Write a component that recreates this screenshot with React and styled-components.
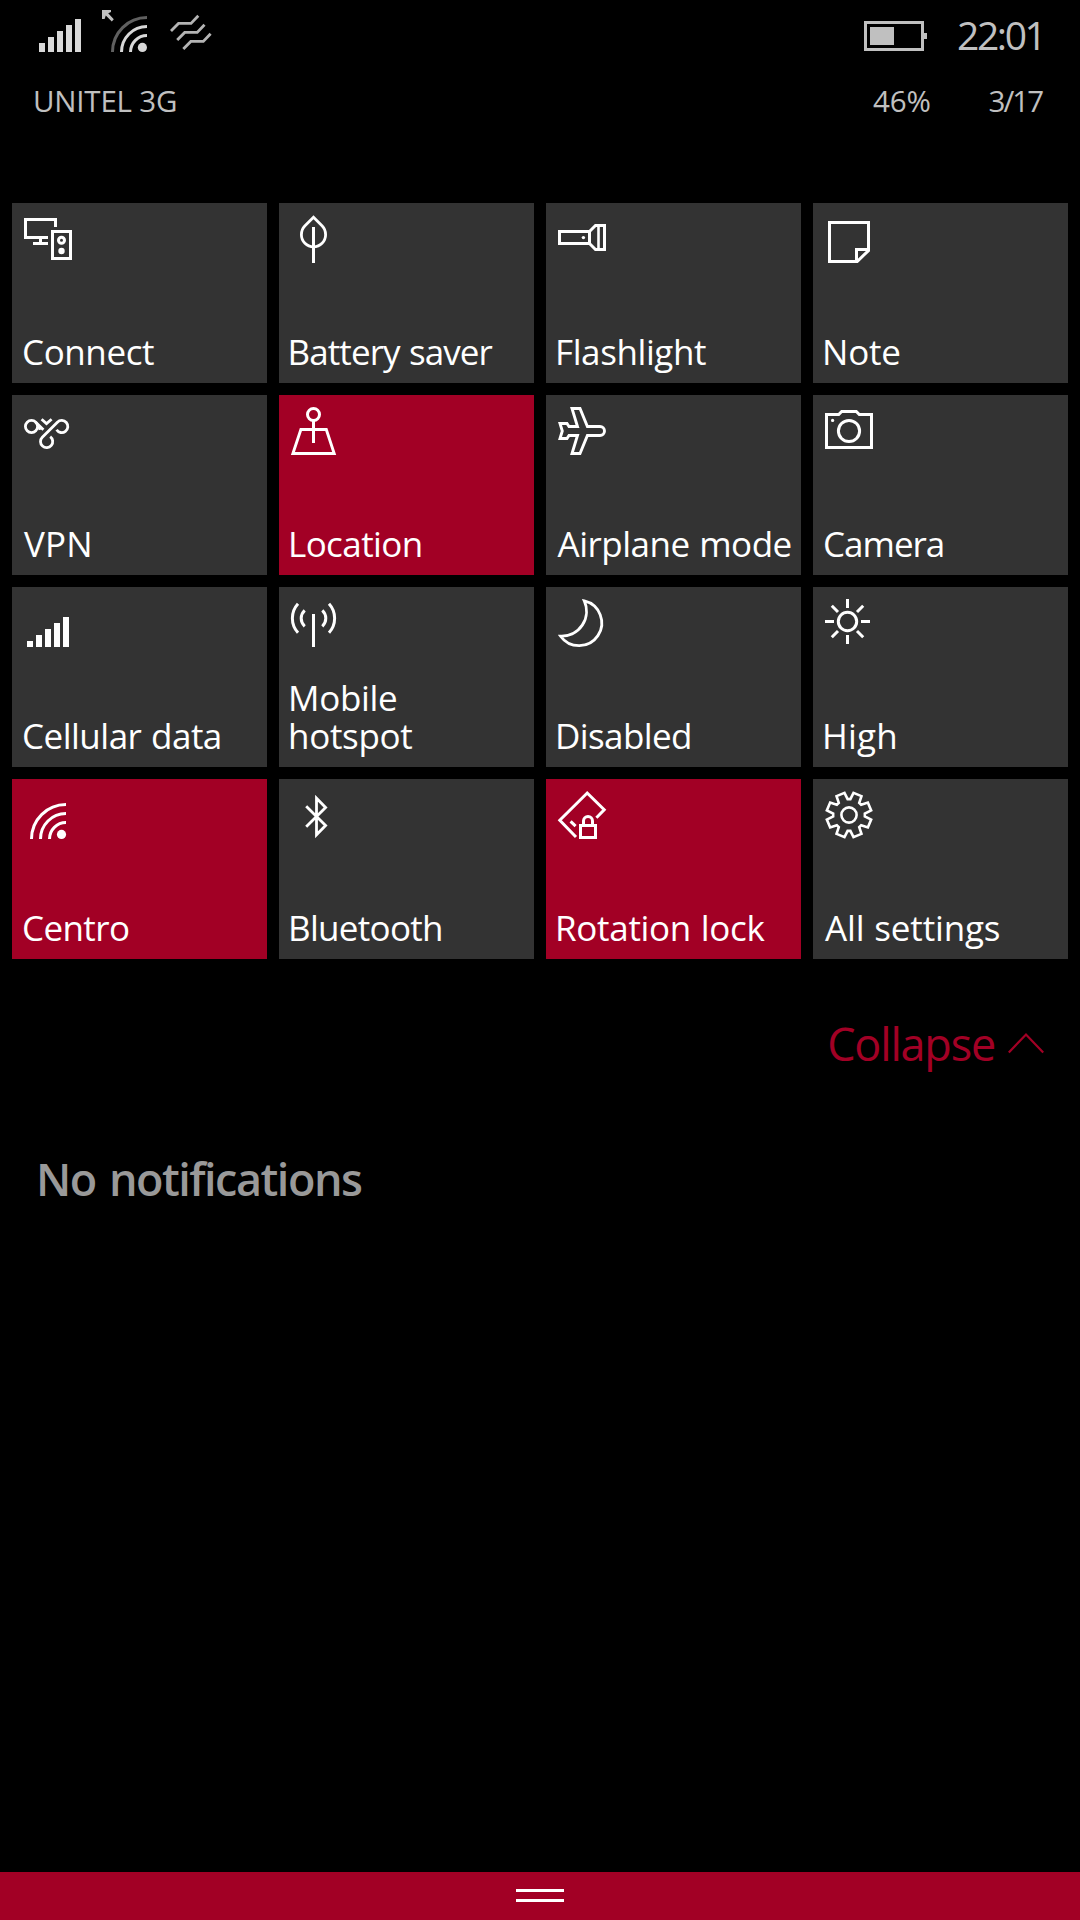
import React from "react";
import styled, { createGlobalStyle } from "styled-components";

const accent = "#a20025";

const polar = (r, deg) => {
  const a = (deg * Math.PI) / 180;
  return `${(36 + r * Math.sin(a)).toFixed(2)} ${(36 - r * Math.cos(a)).toFixed(2)}`;
};

// eight teeth, a flat valley between each pair
const gearPath =
  "M" +
  [0, 45, 90, 135, 180, 225, 270, 315]
    .map((a) =>
      [
        polar(15.9, a - 5),
        polar(15.9, a + 5),
        polar(22.6, a + 11.5),
        polar(22.6, a + 33.5),
      ].join("L")
    )
    .join("L") +
  "Z";

const icons = {
  connect: (
    <>
      <path d="M36 34.5H13.5V16.5H43.5V24M28.5 34.5V40.5M21 40.5H36" />
      <path d="M40.5 28.5H58.5V55.5H40.5Z" />
      <circle cx="49.5" cy="37.3" r="3" />
      <circle className="fill" cx="49.5" cy="48" r="3.2" />
    </>
  ),
  leaf: (
    <>
      <path
        strokeWidth="2.8"
        d="M34.5 14.2L26 22.8C23.6 25.2 22.4 28.3 22.4 31.8A12.1 12.1 0 0 0 46.6 31.8C46.6 28.3 45.4 25.2 43 22.8Z"
      />
      <path d="M34.5 24V60" />
    </>
  ),
  flashlight: (
    <>
      <path d="M43.5 28.5H13.5V40.5H43.5ZM43.5 28.5L49.5 22.5H58.5V46.5H49.5L43.5 40.5" />
      <path strokeWidth="2.6" d="M52.5 22.5V46.5" />
      <circle className="fill" cx="37.4" cy="34.6" r="1.7" />
    </>
  ),
  note: (
    <>
      <path d="M16.5 19.5H55.5V47.5L44.2 58.5H16.5Z" />
      <path d="M43.5 58.5V46.5H55.5" />
    </>
  ),
  vpn: (
    <g strokeWidth="2.8">
      <circle cx="19.5" cy="31.5" r="6.1" />
      <path d="M23.7 27.2L31.4 34.8M26.6 30.4L28 34.8" />
      <path d="M29.6 24.2L34.5 28.6L39.6 24.2" />
      <path d="M44.6 34.8A6.1 6.1 0 1 0 45.4 27.2L30.3 42.2A6.1 6.1 0 1 0 38.2 41.6" />
    </g>
  ),
  location: (
    <>
      <circle cx="34.5" cy="19.5" r="6" />
      <path d="M34.5 26V48" />
      <path strokeWidth="2.9" d="M21.9 34.5H47.3L55.2 58.5H13.9Z" />
    </>
  ),
  airplane: (
    <path
      strokeWidth="2.9"
      d="M54 31.5H41.4L34 13.5H26L31.5 31.5H23L21 28.5H14L16.3 36L14 43.5H21L23 40.5H31.5L26 58.5H34L41.4 40.5H54A4.5 4.5 0 0 0 54 31.5Z"
    />
  ),
  camera: (
    <>
      <path d="M13.5 19.5H25.7L28.7 16.5H43.3L46.3 19.5H58.5V52.5H13.5Z" />
      <circle cx="36" cy="36" r="10.6" />
      <circle className="fill" cx="19.6" cy="25.4" r="1.6" />
    </>
  ),
  cellular: (
    <path
      className="fill"
      d="M15 54h6v6h-6zM24 48h6v12h-6zM33 42h6v18h-6zM42 36h6v24h-6zM51 30h6v30h-6z"
    />
  ),
  hotspot: (
    <>
      <path d="M34.5 27V60" />
      <path d="M25.7 23.3A10.9 10.9 0 0 0 25.7 39.3M43.3 23.3A10.9 10.9 0 0 1 43.3 39.3" />
      <path d="M19 16.8A21.5 21.5 0 0 0 19 45.8M50 16.8A21.5 21.5 0 0 1 50 45.8" />
    </>
  ),
  moon: (
    <path
      strokeWidth="2.8"
      d="M38.3 13.9A22.7 22.7 0 1 1 14.6 49.2A25 25 0 0 0 38.3 13.9Z"
    />
  ),
  sun: (
    <>
      <circle cx="34.5" cy="34.5" r="9.2" />
      <path d="M34.5 12V21M34.5 48V57M12 34.5H21M48 34.5H57" />
      <path d="M18.8 18.8L25 25M50.2 18.8L44 25M18.8 50.2L25 44M50.2 50.2L44 44" />
    </>
  ),
  wifi: (
    <>
      <path d="M19.5 60A34.5 34.5 0 0 1 54 25.5M28.5 60A25.5 25.5 0 0 1 54 34.5M37.5 60A16.5 16.5 0 0 1 54 43.5" />
      <circle className="fill" cx="49.5" cy="55.4" r="4.6" />
    </>
  ),
  bluetooth: (
    <path
      strokeWidth="2.8"
      d="M27.2 27.2L46.6 46.5L37.5 55.8V19.2L46.6 28.4L27.2 47.7"
    />
  ),
  rotation: (
    <>
      <path d="M30 58L13.8 41.2L41.2 14L58.2 30.8L50.4 38.7" />
      <path d="M24.6 42.4L29.6 47.2" />
      <path d="M34.5 46.5H49.5V58.5H34.5ZM37.5 46V42A4.5 4.5 0 0 1 46.5 42V46" />
    </>
  ),
  gear: (
    <>
      <path strokeWidth="2.6" d={gearPath} />
      <circle strokeWidth="2.6" cx="36" cy="36" r="7.6" />
    </>
  ),
};

// pull: how far the label is drawn back so that its first stem lines up with the icon
const tiles = [
  { icon: "connect", label: "Connect", pull: 2, track: -0.4 },
  { icon: "leaf", label: "Battery saver", pull: 3.5, track: -0.9 },
  { icon: "flashlight", label: "Flashlight", pull: 3, track: -0.4 },
  { icon: "note", label: "Note", pull: 3, track: -0.2 },
  { icon: "vpn", label: "VPN", pull: 0, track: 0.2 },
  { icon: "location", label: "Location", pull: 3, track: -0.6 },
  { icon: "airplane", label: "Airplane mode", pull: 0.5, track: -0.5 },
  { icon: "camera", label: "Camera", pull: 2, track: -1 },
  { icon: "cellular", label: "Cellular data", pull: 2, track: -0.5 },
  { icon: "hotspot", label: "Mobile hotspot", pull: 3, track: -0.3, wrap: true },
  { icon: "moon", label: "Disabled", pull: 3, track: -0.6 },
  { icon: "sun", label: "High", pull: 3, track: 0.2 },
  { icon: "wifi", label: "Centro", pull: 2, track: -0.6 },
  { icon: "bluetooth", label: "Bluetooth", pull: 3, track: -0.7 },
  { icon: "rotation", label: "Rotation lock", pull: 3, track: -0.3 },
  { icon: "gear", label: "All settings", pull: 0, track: -0.15 },
];

const active = ["location", "wifi", "rotation"];

const App = () => {
  return (
    <Screen>
      <GlobalStyle />
      <StatusBar>
        <Signals>
          <svg width="42" height="60" viewBox="39 0 42 60">
            <path
              fill="#d8d8d8"
              d="M39 43h6v9h-6zM48 37h6v15h-6zM57 31h6v21h-6zM66 25h6v27h-6zM75 19h6v33h-6z"
            />
          </svg>
          <svg width="45" height="60" viewBox="102 0 45 60">
            <g fill="none" strokeWidth="3">
              <path stroke="#606060" d="M112.5 52A34.5 34.5 0 0 1 147 17.5" />
              <path
                stroke="#d8d8d8"
                d="M121.5 52A25.5 25.5 0 0 1 147 26.5M130.5 52A16.5 16.5 0 0 1 147 35.5"
              />
            </g>
            <circle fill="#d8d8d8" cx="142.4" cy="47.4" r="4.6" />
            <path
              fill="#c0c0c0"
              d="M102 10H111V12L108.2 13.2L113.8 19.3L111.8 21.5L105.8 15.6L104.6 19H102Z"
            />
          </svg>
          <svg width="44" height="60" viewBox="168 0 44 60">
            <g fill="none" stroke="#b4b4b4" strokeWidth="2.8">
              <path d="M171 31L178.5 23.4H191L198.3 15.7" />
              <path d="M177.2 40L184.7 32.4H197.2L204.5 24.7" />
              <path d="M183.3 49L190.8 41.4H203.3L210.6 33.7" />
            </g>
          </svg>
        </Signals>
        <Clock>
          <svg width="63" height="60" viewBox="864 0 63 60">
            <path
              fill="none"
              stroke="#c0c0c0"
              strokeWidth="3"
              d="M865.5 22.5H922.5V49.5H865.5Z"
            />
            <path fill="#c0c0c0" d="M870 27h24v18h-24zM924 33h3v6h-3z" />
          </svg>
          <Time>22:01</Time>
        </Clock>
      </StatusBar>
      <InfoBar>
        <Info $track={-0.2}>UNITEL 3G</Info>
        <Spacer />
        <Info $track={-0.2}>46%</Info>
        <Info $track={-2}>3/17</Info>
      </InfoBar>
      <Tiles>
        {tiles.map((tile) => (
          <Tile key={tile.label} $on={active.includes(tile.icon)}>
            <Icon viewBox="0 0 64 64">{icons[tile.icon]}</Icon>
            <Label $pull={tile.pull} $track={tile.track} $wrap={tile.wrap}>
              {tile.label}
            </Label>
          </Tile>
        ))}
      </Tiles>
      <Collapse>
        Collapse
        <svg width="36" height="24" viewBox="0 0 36 24">
          <path
            fill="none"
            stroke={accent}
            strokeWidth="2.2"
            d="M0.8 20.5L18 2.5L35.2 20.5"
          />
        </svg>
      </Collapse>
      <Empty>No notifications</Empty>
      <Handle>
        <Grip />
        <Grip />
      </Handle>
    </Screen>
  );
};

export default App;

const GlobalStyle = createGlobalStyle`
  * {
    box-sizing: border-box;
  }
  body {
    margin: 0;
    background: #000;
  }
`;

const Screen = styled.div`
  display: flex;
  flex-direction: column;
  width: 1080px;
  height: 1920px;
  overflow: hidden;
  background: #000;
  color: #fff;
  font-family: "Open Sans", "Noto Sans", sans-serif;
  svg {
    display: block;
    flex: none;
  }
`;

const StatusBar = styled.header`
  display: flex;
  justify-content: space-between;
  height: 60px;
  padding: 0 34px 0 39px;
  color: #c0c0c0;
`;

const Signals = styled.div`
  display: flex;
  gap: 21px;
`;

const Clock = styled.div`
  display: flex;
  gap: 30px;
`;

const Time = styled.span`
  width: 89px;
  padding-top: 5px;
  font-size: 39px;
  line-height: 60px;
  letter-spacing: -2.4px;
`;

const InfoBar = styled.div`
  display: flex;
  gap: 58px;
  margin-top: 21px;
  padding: 0 38px 0 33px;
  color: #c0c0c0;
`;

const Info = styled.span`
  font-size: 29.5px;
  line-height: 40px;
  letter-spacing: ${({ $track }) => $track}px;
`;

const Spacer = styled.div`
  flex: 1;
`;

const Tiles = styled.main`
  display: grid;
  grid-template-columns: repeat(4, 255px);
  grid-auto-rows: 180px;
  gap: 12px;
  margin-top: 82px;
  padding: 0 12px;
`;

const Tile = styled.div`
  display: flex;
  flex-direction: column;
  justify-content: space-between;
  padding-bottom: 12px;
  background: ${({ $on }) => ($on ? accent : "#333")};
`;

const Icon = styled.svg`
  width: 64px;
  height: 64px;
  fill: none;
  stroke: #fff;
  stroke-width: 3;
  .fill {
    fill: #fff;
    stroke: none;
  }
`;

const Label = styled.span`
  width: ${({ $wrap }) => ($wrap ? "160px" : "auto")};
  margin-left: ${({ $pull }) => 12 - $pull}px;
  font-size: 35px;
  line-height: 38px;
  letter-spacing: ${({ $track }) => $track}px;
  word-spacing: 1px;
  white-space: ${({ $wrap }) => ($wrap ? "normal" : "nowrap")};
`;

const Collapse = styled.div`
  display: flex;
  justify-content: flex-end;
  align-items: center;
  gap: 13px;
  margin-top: 55px;
  padding-right: 36px;
  color: ${accent};
  font-size: 45px;
  line-height: 60px;
  letter-spacing: -1.2px;
`;

const Empty = styled.p`
  margin: 75px 0 0 36px;
  color: #999;
  font-weight: 600;
  font-size: 45px;
  line-height: 60px;
  letter-spacing: -1.5px;
  word-spacing: 3px;
`;

const Handle = styled.footer`
  display: flex;
  flex-direction: column;
  justify-content: center;
  align-items: center;
  gap: 7px;
  height: 48px;
  margin-top: auto;
  padding-bottom: 1px;
  background: ${accent};
`;

const Grip = styled.div`
  width: 48px;
  height: 3px;
  background: #fff;
`;
